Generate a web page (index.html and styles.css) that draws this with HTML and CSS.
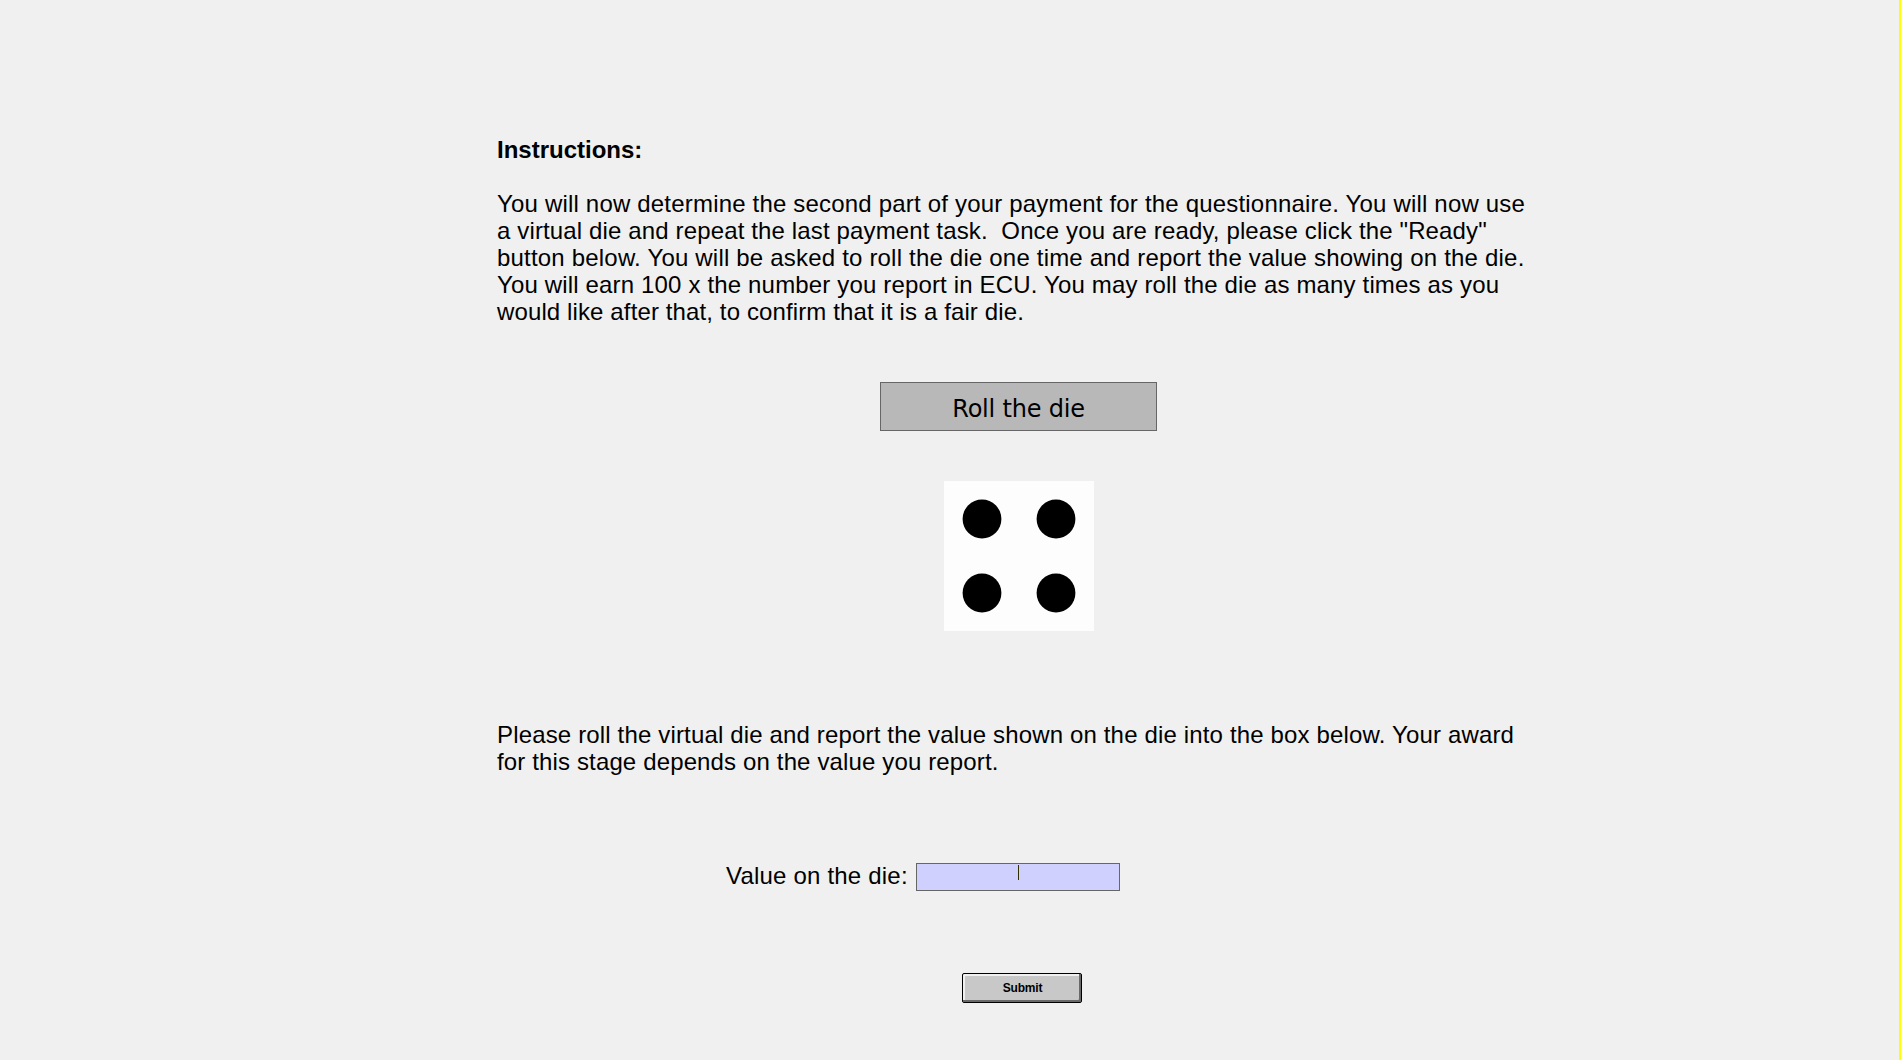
FILE: index.html
```
<!DOCTYPE html>
<html lang="en">
<head>
<meta charset="utf-8">
<title>Questionnaire payment</title>
<link rel="stylesheet" href="styles.css">
</head>
<body>
<main class="stage">
  <h1 class="heading">Instructions:</h1>
  <p class="copy intro"><span class="line l1">You will now determine the second part of your payment for the questionnaire. You will now use</span><span class="line l2">a virtual die and repeat the last payment task.&nbsp; Once you are ready, please click the "Ready"</span><span class="line l3">button below. You will be asked to roll the die one time and report the value showing on the die.</span><span class="line l4">You will earn 100 x the number you report in ECU. You may roll the die as many times as you</span><span class="line l5">would like after that, to confirm that it is a fair die.</span></p>
  <button class="roll" type="button">Roll the die</button>
  <svg class="die" width="150" height="150" viewBox="0 0 150 150" role="img">
    <circle cx="38" cy="38" r="19.4"/><circle cx="112" cy="38" r="19.4"/>
    <circle cx="38" cy="112" r="19.4"/><circle cx="112" cy="112" r="19.4"/>
  </svg>
  <p class="copy prompt"><span class="line l6">Please roll the virtual die and report the value shown on the die into the box below. Your award</span><span class="line l7">for this stage depends on the value you report.</span></p>
  <div class="answer"><span class="label">Value on the die:</span><div class="field"><span class="caret"></span></div></div>
  <button class="submit" type="button">Submit</button>
</main>
</body>
</html>
```

FILE: styles.css
```
* { box-sizing: border-box; }
body { margin: 0; background: #f0f0f0; color: #000; font: 24px/27px "Liberation Sans", Arial, sans-serif; }
.stage { display: flex; flex-direction: column; align-items: flex-start; height: 1060px; padding: 136px 0 0 497px; border-right: 2px solid #ff0; }
.heading { margin: 0; font-size: 24px; line-height: 27px; }
.copy { margin: 0; }
.line { display: block; width: max-content; white-space: pre; }
.l1 { letter-spacing: 0.188px; }
.l2 { letter-spacing: 0.137px; }
.l3 { letter-spacing: 0.194px; }
.l4 { letter-spacing: 0.16px; }
.l5 { letter-spacing: 0.12px; }
.l6 { letter-spacing: 0.157px; }
.l7 { letter-spacing: 0.14px; }
.intro { margin-top: 27px; }
.roll { width: 277px; height: 49px; margin: 57px 0 0 383px; padding: 5px 0 0; border: 1px solid #666; background: #b8b8b8; color: #000; font: 24px/28px "DejaVu Sans", Verdana, sans-serif; letter-spacing: -0.2px; }
.die { display: block; margin: 50px 0 0 447px; background: #fdfdfd; }
.prompt { margin-top: 90px; }
.answer { display: flex; margin: 88px 0 0 229px; }
.label { width: 190px; height: 27px; white-space: nowrap; line-height: 25px; letter-spacing: 0.2px; }
.field { display: flex; justify-content: center; width: 204px; height: 28px; padding-top: 1px; border: 1px solid #666; background: #d0d0ff; }
.caret { width: 1px; height: 15px; background: #303000; }
.submit { width: 120px; height: 30px; margin: 82px 0 0 465px; padding: 0 0 0 1px; border: 1px solid #000; border-radius: 2px; background: #c8c8c8; color: #000; box-shadow: inset -2px -2px #696969, inset 2px 2px #f0f0f0; font: bold 12px/14px "Liberation Sans", Arial, sans-serif; letter-spacing: -0.2px; }
```
